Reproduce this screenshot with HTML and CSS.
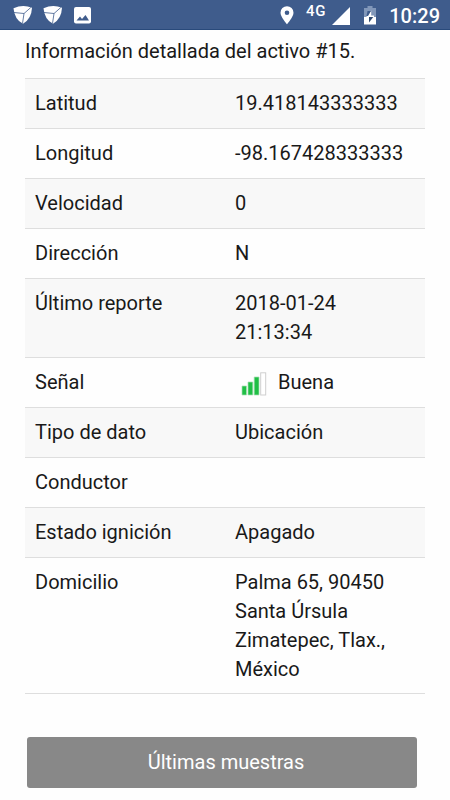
FILE: index.html
```
<!DOCTYPE html>
<html lang="es">
<head>
    <meta charset="UTF-8">
    <meta name="viewport" content="width=device-width, initial-scale=1.0">
    <title>Detalle del activo</title>
    <link rel="stylesheet" href="styles.css">
</head>
<body>
    <header class="status-bar">
        <svg class="shield" width="20" height="18" viewBox="0 0 20 18">
            <path d="M0.5 2.2Q10 -1.8 19 1.8Q18.5 13 10 17.8Q1.5 13.5 0.5 2.2Z" fill="#fff"/>
            <path d="M0.8 6.5L11 7.5L17.8 1.5M11 7.5L9.5 17.5" fill="none" stroke="#3f5c8c" stroke-width="0.8"/>
        </svg>
        <svg class="shield" width="20" height="18" viewBox="0 0 20 18">
            <path d="M0.5 2.2Q10 -1.8 19 1.8Q18.5 13 10 17.8Q1.5 13.5 0.5 2.2Z" fill="#fff"/>
            <path d="M0.8 6.5L11 7.5L17.8 1.5M11 7.5L9.5 17.5" fill="none" stroke="#3f5c8c" stroke-width="0.8"/>
        </svg>
        <svg class="image" width="17" height="17" viewBox="0 0 17 17">
            <rect width="17" height="16.5" rx="2" fill="#fff"/>
            <path d="M2.5 13.5L6 9.5L8 12L11.5 8L15 13.5Z" fill="#3f5c8c"/>
        </svg>
        <svg class="pin" width="14" height="19" viewBox="0 0 14 19">
            <path d="M7 0.2A6.5 6.5 0 0 0 0.5 6.7C0.5 11 7 18.2 7 18.2S13.5 11 13.5 6.7A6.5 6.5 0 0 0 7 0.2ZM7 4.4A2.3 2.3 0 1 1 7 9A2.3 2.3 0 0 1 7 4.4Z" fill="#fff" fill-rule="evenodd"/>
        </svg>
        <span class="network">4G</span>
        <svg class="signal" width="18" height="18" viewBox="0 0 18 18">
            <path d="M0 18L18 0V18Z" fill="#fff"/>
        </svg>
        <svg class="battery" width="12" height="19" viewBox="0 0 12 19">
            <path d="M3.5 0H8.5V2H12V11H0V2H3.5Z" fill="#8197b9"/>
            <path d="M0 11H12V18.5H0Z" fill="#fff"/>
            <path d="M7.2 4.5L2.2 11H10L10 9.5H7.2Z" fill="#fff"/>
            <path d="M3.5 5H7L4 10H2.5Z" fill="#3f5c8c"/>
            <path d="M5 11H9.3L5 16.5Z" fill="#2f496f"/>
        </svg>
        <span class="clock">10:29</span>
    </header>

    <main>
        <p class="intro">Información detallada del activo #15.</p>

        <table class="details">
            <tr><td>Latitud</td><td>19.418143333333</td></tr>
            <tr><td>Longitud</td><td>-98.167428333333</td></tr>
            <tr><td>Velocidad</td><td>0</td></tr>
            <tr><td>Dirección</td><td>N</td></tr>
            <tr><td>Último reporte</td><td>2018-01-24 21:13:34</td></tr>
            <tr>
                <td>Señal</td>
                <td>
                    <div class="strength">
                        <svg width="26" height="24" viewBox="0 0 26 24">
                            <path d="M1 14H5.5V23H1ZM7 10H11.8V23H7ZM13.2 5H18V23H13.2Z" fill="#20bf45" stroke="#a9dfb5" stroke-width="0.7"/>
                            <rect x="19.7" y="0.8" width="5" height="22.2" fill="#fff" stroke="#cfcfcf"/>
                        </svg>
                        <span>Buena</span>
                    </div>
                </td>
            </tr>
            <tr><td>Tipo de dato</td><td>Ubicación</td></tr>
            <tr><td>Conductor</td><td></td></tr>
            <tr><td>Estado ignición</td><td>Apagado</td></tr>
            <tr><td>Domicilio</td><td>Palma 65, 90450 Santa Úrsula Zimatepec, Tlax., México</td></tr>
        </table>

        <button type="button" class="samples">Últimas muestras</button>
    </main>
</body>
</html>
```
FILE: styles.css
```
body {
    margin: 0;
    height: 800px;
    overflow: hidden;
    background-color: #fefefe;
    color: #191919;
    font-family: Roboto, sans-serif;
    font-size: 20px;
    line-height: 29px;
}

.status-bar {
    display: flex;
    align-items: flex-start;
    box-sizing: border-box;
    height: 30px;
    padding: 6px 10px 0 13px;
    background-color: #3f5c8c;
    border-bottom: 1px solid #294a7b;
    color: #fff;
}

.shield {
    margin-right: 10px;
}

.image {
    margin: 1px auto 0 1px;
}

.pin {
    margin-right: 12px;
}

.network {
    margin-top: -3px;
    font-size: 15px;
    font-weight: 500;
    line-height: 17px;
    letter-spacing: 0.8px;
}

.signal {
    margin: 1px 14px 0 6px;
}

.battery {
    margin-right: 13px;
}

.clock {
    font-size: 20px;
    font-weight: 500;
    line-height: 20px;
}

main {
    padding: 0 25px;
}

.intro {
    margin: 0;
    padding: 7px 0 12px;
}

.details {
    width: 400px;
    table-layout: fixed;
    border-spacing: 0;
    border-bottom: 1px solid #dedede;
}

.details td {
    box-sizing: border-box;
    height: 50px;
    padding: 10px;
    border-top: 1px solid #dedede;
    vertical-align: top;
}

.details tr:last-child td {
    padding-bottom: 9px;
}

.details tr:nth-child(odd) {
    background-color: #f8f8f8;
}

.strength {
    display: flex;
    gap: 11px;
    height: 29px;
    padding-left: 6px;
}

.strength svg {
    margin-top: 4px;
}

.samples {
    display: block;
    width: 390px;
    height: 51px;
    margin: 43px 0 0 2px;
    padding: 0 0 0 8px;
    background-color: #888;
    border: none;
    border-radius: 3px;
    color: #fff;
    font: inherit;
}
```
